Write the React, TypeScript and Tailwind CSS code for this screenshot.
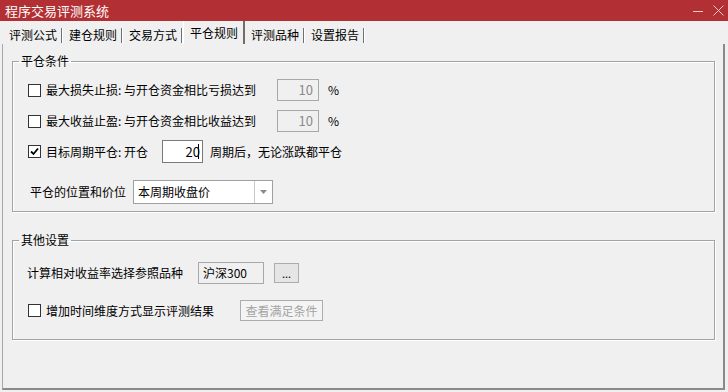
import React from 'react';

const FONT = { fontFamily: "'Noto Sans CJK SC', 'Noto Sans', sans-serif" };

const tabs = ['评测公式', '建仓规则', '交易方式', '平仓规则', '评测品种', '设置报告'];

const CheckBox: React.FC<{ checked?: boolean }> = ({ checked }) => (
    <span className="w-[13px] h-[13px] border border-[#333333] bg-white flex items-center justify-center shrink-0">
        {checked && (
            <svg width="9" height="9" viewBox="0 0 9 9">
                <polyline points="1,4.5 3.5,7 8,1.5" fill="none" stroke="#000" strokeWidth="1.8" />
            </svg>
        )}
    </span>
);

const DisabledNum: React.FC = () => (
    <div className="w-[42px] h-[22px] border border-[#a8a8a8] bg-[#f0f0f0] flex items-center justify-end pr-[5px] text-[#8a8a8a] text-[13px]">
        10
    </div>
);

export default function App() {
    return (
        <div className="w-[728px] h-[392px] bg-[#f0f0f0] flex flex-col text-[12px] text-black select-none overflow-hidden" style={FONT}>
            {/* Title bar */}
            <div className="h-[21px] bg-[#b22f33] flex items-center shrink-0">
                <span className="pl-[5px] text-white text-[13px] leading-none flex-1">程序交易评测系统</span>
                <svg width="12" height="12" viewBox="0 0 12 12" className="mr-[9px]">
                    <line x1="1" y1="6.5" x2="11" y2="6.5" stroke="#f3c9c9" strokeWidth="1" />
                </svg>
                <svg width="11" height="11" viewBox="0 0 11 11" className="mr-[4px]">
                    <line x1="0.5" y1="0.5" x2="10.5" y2="10.5" stroke="#f3c9c9" strokeWidth="1" />
                    <line x1="10.5" y1="0.5" x2="0.5" y2="10.5" stroke="#f3c9c9" strokeWidth="1" />
                </svg>
            </div>

            {/* Tabs */}
            <div className="h-[23px] flex items-end pl-[3px] shrink-0">
                {tabs.map((t, i) => {
                    const active = i === 3;
                    return active ? (
                        <div key={t} className="w-[62px] h-[23px] pl-[6px] pt-[3px] border-l border-white border-r-2 border-r-[#6e6e6e] flex items-start leading-[18px] text-[12px]">
                            {t}
                        </div>
                    ) : (
                        <div key={t} className="w-[60px] h-[21px] pl-[6px] flex items-center">
                            <span className="flex-1 leading-[16px] mt-[3px]">{t}</span>
                            <span className="w-[2px] h-[15px] bg-[#707070] border-r border-white mt-[3px]" />
                        </div>
                    );
                })}
            </div>

            {/* Panel */}
            <div className="flex-1 ml-[2px] mr-[3px] mb-[2px] border-l border-[#a8a8a8] border-r-2 border-b-2 border-r-[#8a8a8a] border-b-[#8a8a8a] flex flex-col">
                {/* 平仓条件 */}
                <fieldset className="ml-[9px] mt-[9px] w-[703px] border border-[#a3a3a3] shadow-[inset_1px_1px_0_#fff,1px_1px_0_#fff] pb-[7px]">
                    <legend className="ml-[6px] px-[2px] leading-[16px]">平仓条件</legend>

                    <div className="flex items-center h-[22px] mt-[10px] pl-[15px]">
                        <CheckBox />
                        <span className="ml-[5px] w-[231px] leading-[16px]">最大损失止损: 与开仓资金相比亏损达到</span>
                        <DisabledNum />
                        <span className="ml-[9px]">%</span>
                    </div>

                    <div className="flex items-center h-[22px] mt-[9px] pl-[15px]">
                        <CheckBox />
                        <span className="ml-[5px] w-[231px] leading-[16px]">最大收益止盈: 与开仓资金相比收益达到</span>
                        <DisabledNum />
                        <span className="ml-[9px]">%</span>
                    </div>

                    <div className="flex items-center h-[23px] mt-[8px] pl-[15px]">
                        <CheckBox checked />
                        <span className="ml-[5px] w-[116px] leading-[16px]">目标周期平仓: 开仓</span>
                        <div className="w-[41px] h-[23px] border border-[#7a7a7a] bg-white flex items-center justify-end pr-[3px] text-[13px]">
                            <span>20</span>
                            <span className="w-px h-[15px] bg-black -ml-[2px]" />
                        </div>
                        <span className="ml-[7px] leading-[16px]">周期后，无论涨跌都平仓</span>
                    </div>

                    <div className="flex items-center h-[24px] mt-[17px] pl-[17px]">
                        <span className="w-[103px] leading-[16px]">平仓的位置和价位</span>
                        <div className="w-[140px] h-[24px] border border-[#a0a0a0] bg-white flex items-center">
                            <span className="flex-1 pl-[4px] leading-[16px]">本周期收盘价</span>
                            <div className="w-[18px] h-full border-l border-[#c8c8c8] flex items-center justify-center">
                                <svg width="7" height="4" viewBox="0 0 7 4">
                                    <polygon points="0,0 7,0 3.5,4" fill="#8a8a8a" />
                                </svg>
                            </div>
                        </div>
                    </div>
                </fieldset>

                {/* 其他设置 */}
                <fieldset className="ml-[9px] mt-[20px] w-[703px] border border-[#a3a3a3] shadow-[inset_1px_1px_0_#fff,1px_1px_0_#fff] pb-[18px]">
                    <legend className="ml-[6px] px-[2px] leading-[16px]">其他设置</legend>

                    <div className="flex items-center h-[22px] mt-[14px] pl-[14px]">
                        <span className="w-[171px] leading-[16px]">计算相对收益率选择参照品种</span>
                        <div className="w-[66px] h-[22px] border border-[#a8a8a8] bg-[#f0f0f0] flex items-center pl-[4px] text-[12px]">
                            沪深300
                        </div>
                        <button className="ml-[10px] w-[25px] h-[20px] border border-[#adadad] bg-[#e5e5e5] flex items-end justify-center pb-[3px] text-[11px] leading-none">
                            ...
                        </button>
                    </div>

                    <div className="flex items-center h-[21px] mt-[16px] pl-[15px]">
                        <CheckBox />
                        <span className="ml-[5px] w-[194px] leading-[16px]">增加时间维度方式显示评测结果</span>
                        <button disabled className="w-[83px] h-[21px] border border-[#adadad] bg-[#f4f4f4] text-[#a3a3a3] flex items-center justify-center leading-none text-[12px]">
                            查看满足条件
                        </button>
                    </div>
                </fieldset>
            </div>
        </div>
    );
}
